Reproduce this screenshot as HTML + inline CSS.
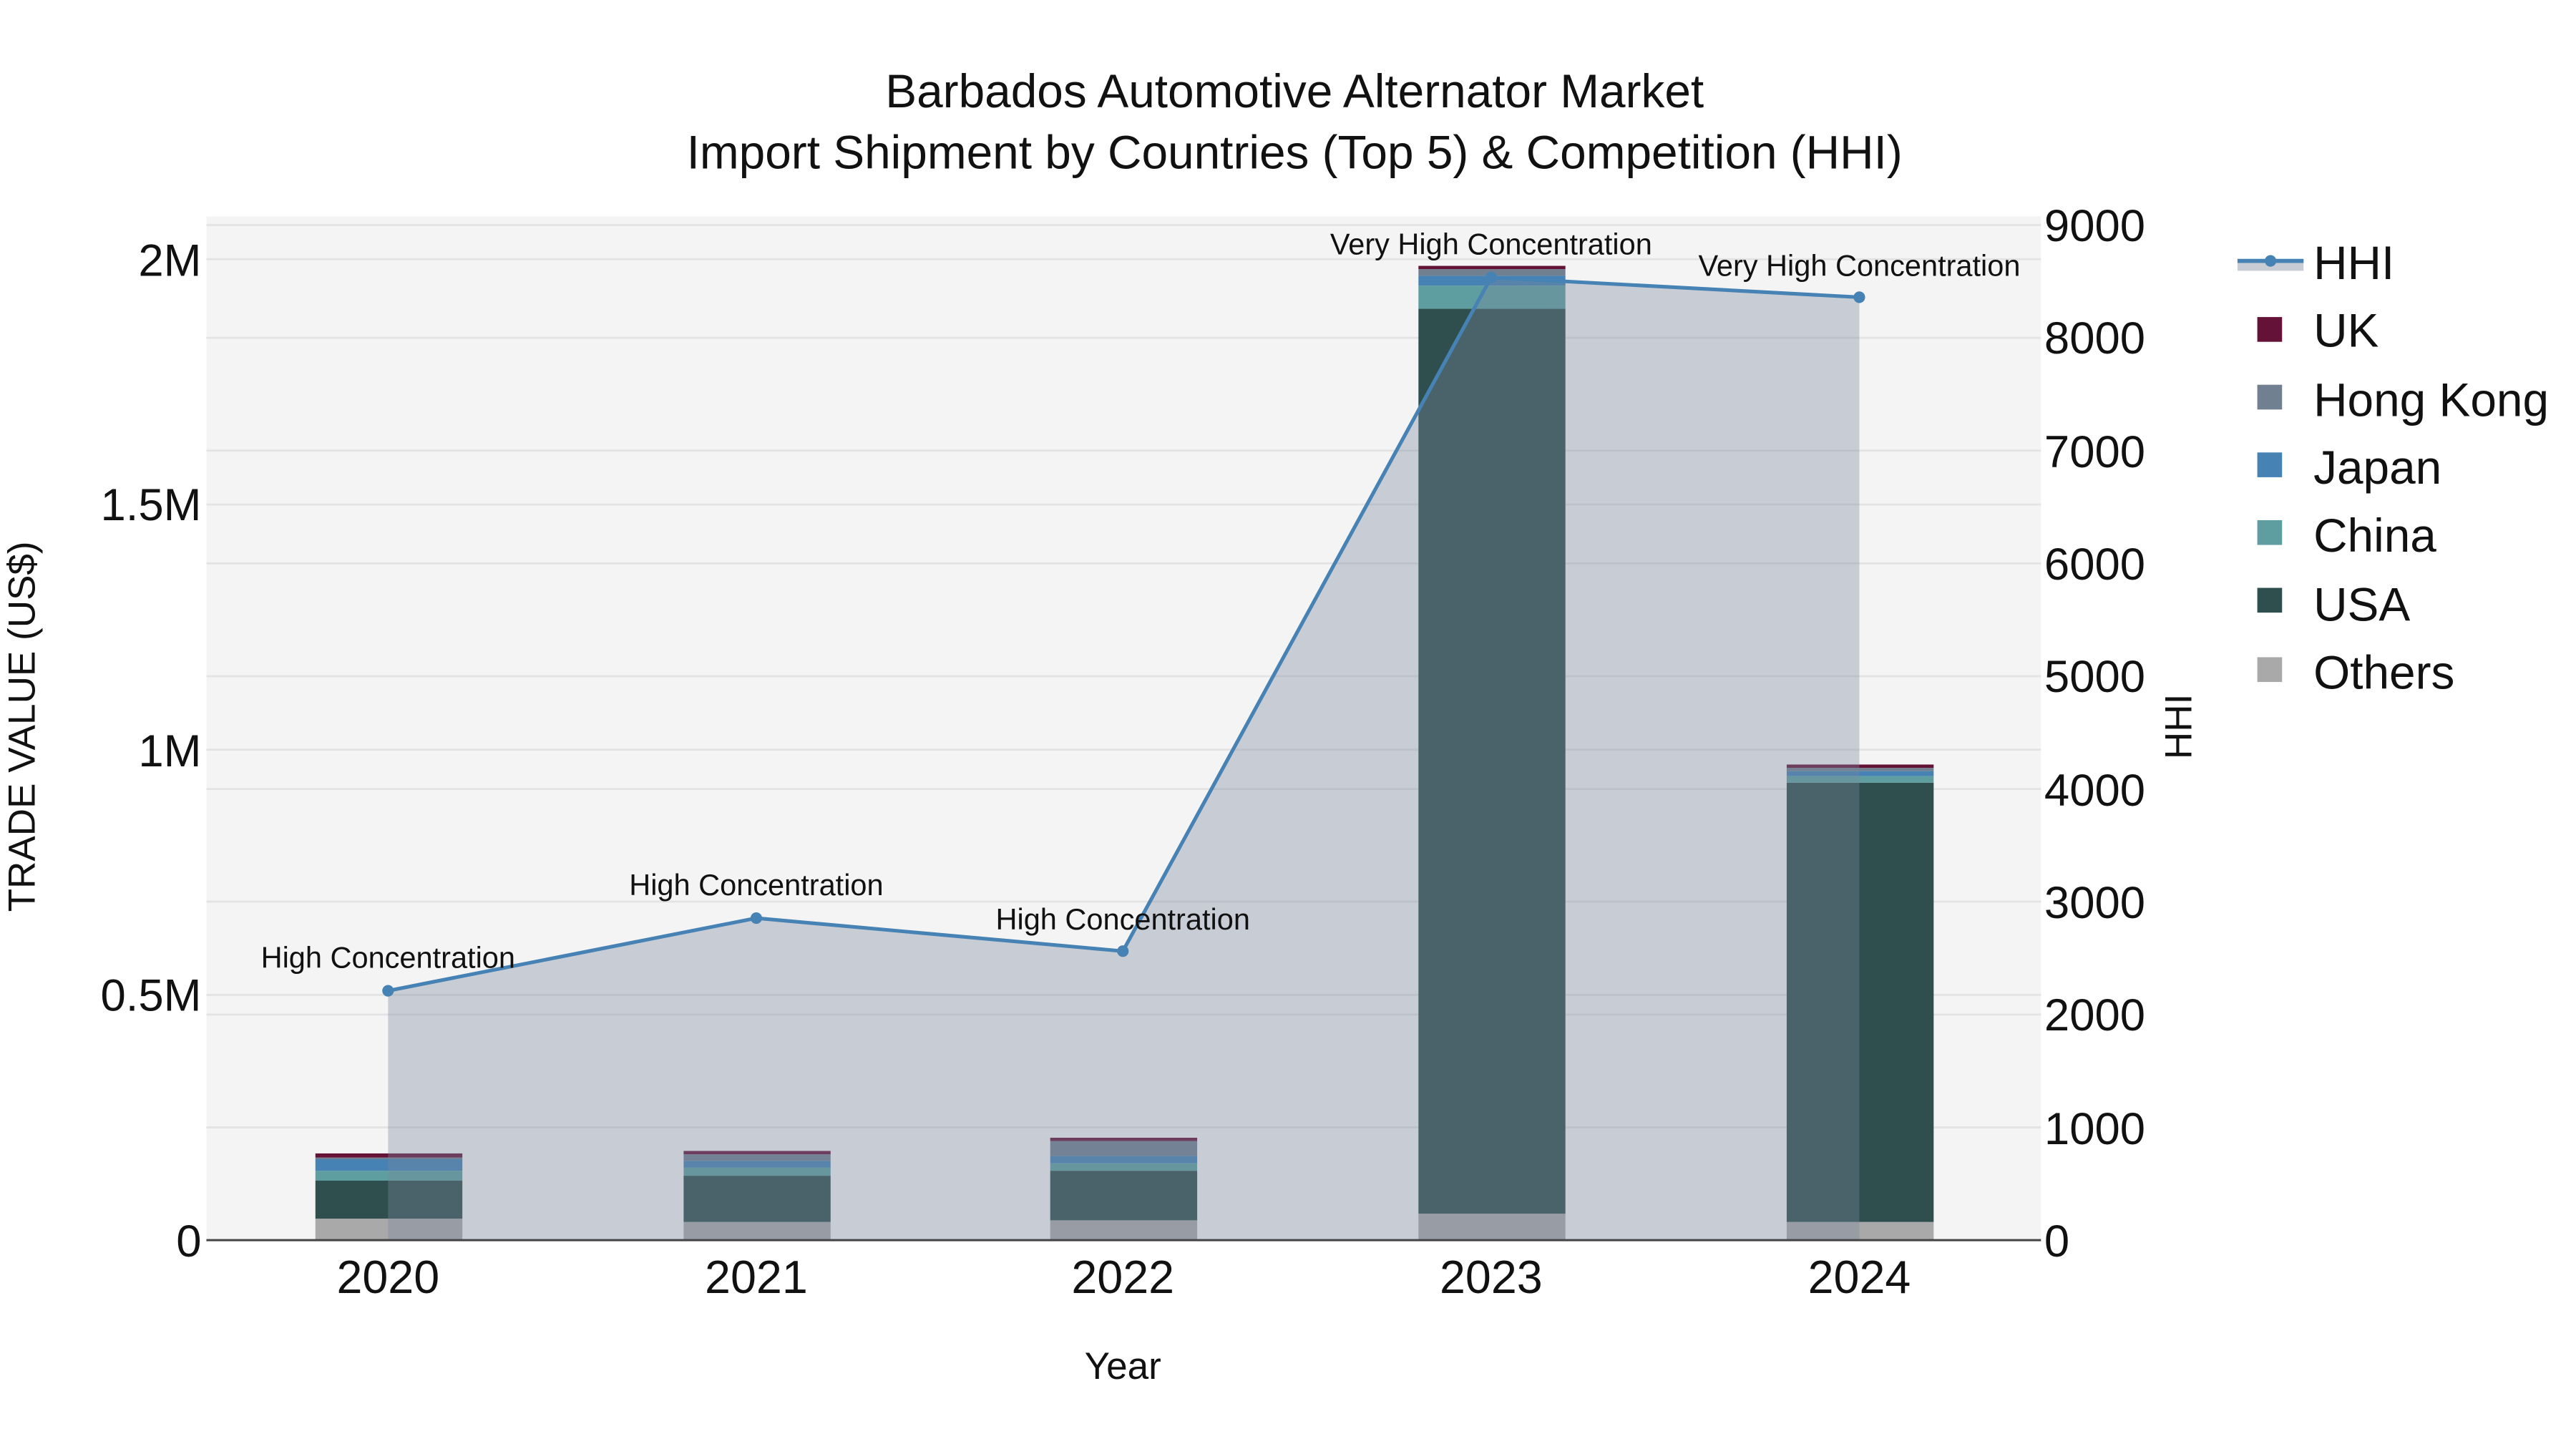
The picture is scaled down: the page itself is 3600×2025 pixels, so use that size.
<!DOCTYPE html>
<html><head><meta charset="utf-8"><style>
html,body{margin:0;padding:0;background:#fff;}
svg{display:block;font-family:"Liberation Sans",Arial,sans-serif;}
</style></head><body>
<svg width="3600" height="2025" viewBox="0 0 1560 877.5" xmlns="http://www.w3.org/2000/svg">
<rect x="0" y="0" width="1560" height="877.5" fill="#fff"/>
<rect x="125" y="131" width="1111" height="620" fill="#f4f4f4"/>
<g stroke="#e3e3e3" stroke-width="1.2">
<line x1="125" x2="1236" y1="602.5" y2="602.5"/>
<line x1="125" x2="1236" y1="454" y2="454"/>
<line x1="125" x2="1236" y1="305.5" y2="305.5"/>
<line x1="125" x2="1236" y1="157" y2="157"/>
<line x1="125" x2="1236" y1="682.7" y2="682.7"/>
<line x1="125" x2="1236" y1="614.4" y2="614.4"/>
<line x1="125" x2="1236" y1="546" y2="546"/>
<line x1="125" x2="1236" y1="477.8" y2="477.8"/>
<line x1="125" x2="1236" y1="409.5" y2="409.5"/>
<line x1="125" x2="1236" y1="341.2" y2="341.2"/>
<line x1="125" x2="1236" y1="272.9" y2="272.9"/>
<line x1="125" x2="1236" y1="204.6" y2="204.6"/>
<line x1="125" x2="1236" y1="136.3" y2="136.3"/>
</g>
<g>
<rect x="191" y="738" width="89" height="13" fill="#a9a9a9"/>
<rect x="191" y="715" width="89" height="23" fill="#2f4f4f"/>
<rect x="191" y="709" width="89" height="6" fill="#5f9ea0"/>
<rect x="191" y="702" width="89" height="7" fill="#4682b4"/>
<rect x="191" y="701" width="89" height="1" fill="#708090"/>
<rect x="191" y="698.5" width="89" height="2.5" fill="#641337"/>

<rect x="414" y="740" width="89" height="11" fill="#a9a9a9"/>
<rect x="414" y="712" width="89" height="28" fill="#2f4f4f"/>
<rect x="414" y="707" width="89" height="5" fill="#5f9ea0"/>
<rect x="414" y="703" width="89" height="4" fill="#4682b4"/>
<rect x="414" y="699" width="89" height="4" fill="#708090"/>
<rect x="414" y="697" width="89" height="2" fill="#641337"/>

<rect x="636" y="739" width="89" height="12" fill="#a9a9a9"/>
<rect x="636" y="709" width="89" height="30" fill="#2f4f4f"/>
<rect x="636" y="704.5" width="89" height="4.5" fill="#5f9ea0"/>
<rect x="636" y="700" width="89" height="4.5" fill="#4682b4"/>
<rect x="636" y="691" width="89" height="9" fill="#708090"/>
<rect x="636" y="689" width="89" height="2" fill="#641337"/>

<rect x="859" y="735" width="89" height="16" fill="#a9a9a9"/>
<rect x="859" y="187" width="89" height="548" fill="#2f4f4f"/>
<rect x="859" y="173" width="89" height="14" fill="#5f9ea0"/>
<rect x="859" y="167" width="89" height="6" fill="#4682b4"/>
<rect x="859" y="163" width="89" height="4" fill="#708090"/>
<rect x="859" y="161" width="89" height="2" fill="#641337"/>

<rect x="1082" y="740" width="89" height="11" fill="#a9a9a9"/>
<rect x="1082" y="474" width="89" height="266" fill="#2f4f4f"/>
<rect x="1082" y="470" width="89" height="4" fill="#5f9ea0"/>
<rect x="1082" y="467" width="89" height="3" fill="#4682b4"/>
<rect x="1082" y="465" width="89" height="2" fill="#708090"/>
<rect x="1082" y="463" width="89" height="2" fill="#641337"/>
</g>
<polygon points="235,600 458,556 680,576 903,168 1126,180 1126,751 235,751" fill="rgba(123,137,159,0.36)"/>
<line x1="125" x2="1236" y1="751" y2="751" stroke="#444" stroke-width="1.3"/>
<polyline points="235,600 458,556 680,576 903,168 1126,180" fill="none" stroke="#4682b4" stroke-width="2.2"/>
<g fill="#4682b4">
<circle cx="235" cy="600" r="3.5"/><circle cx="458" cy="556" r="3.5"/><circle cx="680" cy="576" r="3.5"/><circle cx="903" cy="168" r="3.5"/><circle cx="1126" cy="180" r="3.5"/>
</g>
<g font-size="18" fill="#111" text-anchor="middle">
<text x="235" y="586">High Concentration</text>
<text x="458" y="542">High Concentration</text>
<text x="680" y="563">High Concentration</text>
<text x="903" y="154">Very High Concentration</text>
<text x="1126" y="167">Very High Concentration</text>
</g>
<g font-size="28.5" fill="#111" text-anchor="middle">
<text x="784" y="65">Barbados Automotive Alternator Market</text>
<text x="784" y="102">Import Shipment by Countries (Top 5) &amp; Competition (HHI)</text>
</g>
<g font-size="27.5" fill="#111" text-anchor="end">
<text x="122" y="761">0</text>
<text x="122" y="612">0.5M</text>
<text x="122" y="464">1M</text>
<text x="122" y="315">1.5M</text>
<text x="122" y="167">2M</text>
</g>
<g font-size="27.5" fill="#111" text-anchor="start">
<text x="1238" y="761">0</text>
<text x="1238" y="693">1000</text>
<text x="1238" y="624">2000</text>
<text x="1238" y="556">3000</text>
<text x="1238" y="488">4000</text>
<text x="1238" y="419">5000</text>
<text x="1238" y="351">6000</text>
<text x="1238" y="283">7000</text>
<text x="1238" y="214">8000</text>
<text x="1238" y="146">9000</text>
</g>
<g font-size="28" fill="#111" text-anchor="middle">
<text x="235" y="783">2020</text>
<text x="458" y="783">2021</text>
<text x="680" y="783">2022</text>
<text x="903" y="783">2023</text>
<text x="1126" y="783">2024</text>
</g>
<text x="680" y="835" font-size="23" fill="#111" text-anchor="middle">Year</text>
<text transform="translate(21,440) rotate(-90)" font-size="23" fill="#111" text-anchor="middle">TRADE VALUE (US$)</text>
<text transform="translate(1327,440) rotate(-90)" font-size="23" fill="#111" text-anchor="middle">HHI</text>
<rect x="1355" y="157" width="40" height="7" fill="#c8cdd5"/>
<line x1="1355" x2="1395" y1="158" y2="158" stroke="#4682b4" stroke-width="2.5"/>
<circle cx="1375" cy="158" r="3.5" fill="#4682b4"/>
<rect x="1367" y="192" width="15" height="15" fill="#641337"/>
<rect x="1367" y="233" width="15" height="15" fill="#708090"/>
<rect x="1367" y="274" width="15" height="15" fill="#4682b4"/>
<rect x="1367" y="315" width="15" height="15" fill="#5f9ea0"/>
<rect x="1367" y="356" width="15" height="15" fill="#2f4f4f"/>
<rect x="1367" y="398" width="15" height="15" fill="#a9a9a9"/>
<g font-size="28.5" fill="#111">
<text x="1401" y="169">HHI</text>
<text x="1401" y="210">UK</text>
<text x="1401" y="252">Hong Kong</text>
<text x="1401" y="293">Japan</text>
<text x="1401" y="334">China</text>
<text x="1401" y="376">USA</text>
<text x="1401" y="417">Others</text>
</g>
</svg>
</body></html>
